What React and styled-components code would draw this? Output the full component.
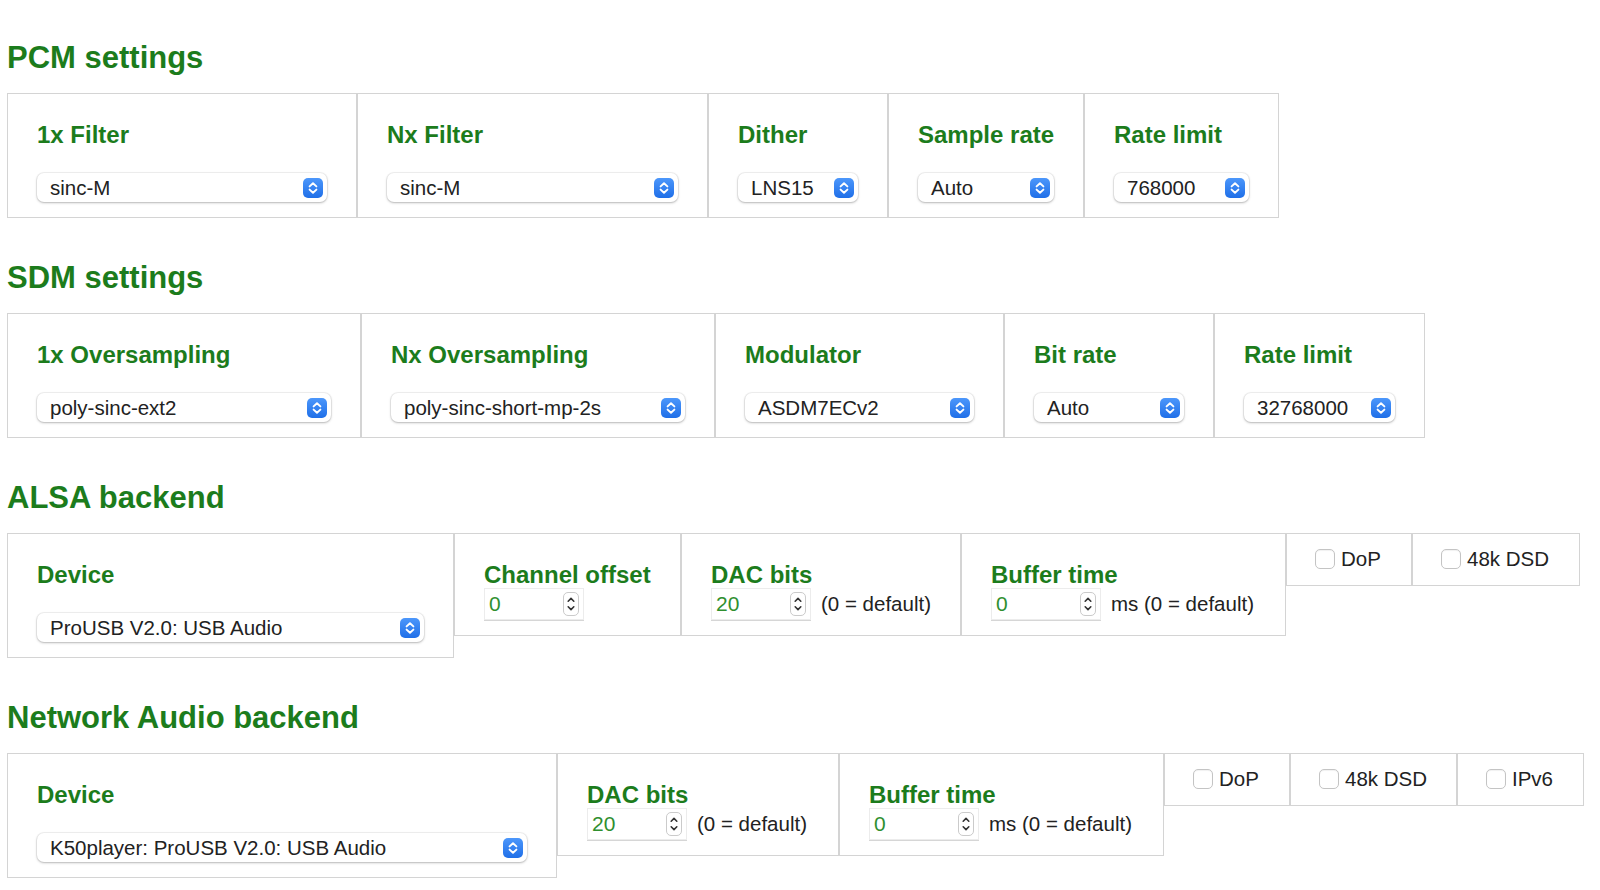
import React from 'react';
import styled, { createGlobalStyle } from 'styled-components';

const GlobalStyle = createGlobalStyle`
    html, body {
        margin: 0;
        padding: 0;
        background: #fff;
    }
    body {
        font-family: "Liberation Sans", Arial, Helvetica, sans-serif;
        color: #222;
    }
`

const Page = styled.div`
    padding: 40px 0 0 7px;
`

const Section = styled.section`
    margin-bottom: 42px;
`

const Heading = styled.h2`
    margin: 0 0 17px;
    font-size: 31px;
    line-height: 36px;
    font-weight: bold;
    color: #1c7c1c;
`

const Row = styled.div`
    display: flex;
    align-items: flex-start;
`

const Cell = styled.div`
    box-sizing: border-box;
    flex: none;
    width: ${p => p.$w}px;
    border: 1px solid #d4d4d4;
    padding: 29px 29px 15px;
`

const CheckCell = styled(Cell)`
    height: 53px;
    padding: 0 28px 2px;
    display: flex;
    align-items: center;
    gap: 6px;
    font-size: 20.5px;
    color: #222;
`

const Label = styled.div`
    font-size: 24px;
    line-height: 24px;
    font-weight: bold;
    color: #1c7c1c;
    white-space: nowrap;
`

const Select = styled.div`
    box-sizing: border-box;
    margin-top: 26px;
    height: 29px;
    width: 100%;
    display: flex;
    align-items: center;
    justify-content: space-between;
    padding: 0 4px 0 13px;
    background: #fff;
    border-radius: 7px;
    box-shadow: 0 0 0 1px rgba(0, 0, 0, 0.05), 0 1px 2.5px rgba(0, 0, 0, 0.25);
    font-size: 20.5px;
    color: #222;
    white-space: nowrap;
`

const Stepper = styled.span`
    flex: none;
    width: 20px;
    height: 20px;
    border-radius: 5px;
    background: linear-gradient(#4c97fb, #1f6fe8);
    display: flex;
    align-items: center;
    justify-content: center;
`

const NumberRow = styled.div`
    margin-top: 1px;
    display: flex;
    align-items: center;
    gap: 10px;
    font-size: 20.5px;
    color: #222;
    white-space: nowrap;
`

const NumberBox = styled.div`
    box-sizing: border-box;
    flex: none;
    width: ${p => p.$w}px;
    height: 32px;
    display: flex;
    align-items: center;
    justify-content: space-between;
    padding: 0 4px 0 4px;
    border: 1px solid #ececec;
    box-shadow: 0 1px 0 #d6d6d6;
    color: #2f8f2f;
    font-size: 21px;
`

const Spin = styled.span`
    box-sizing: border-box;
    width: 16px;
    height: 24px;
    border: 1px solid #cbcbcb;
    border-radius: 5px;
    display: flex;
    align-items: center;
    justify-content: center;
`

const Box = styled.span`
    box-sizing: border-box;
    flex: none;
    width: 20px;
    height: 20px;
    border: 1px solid #c4c4c4;
    border-radius: 5px;
    background: #fff;
    box-shadow: inset 0 1px 1px rgba(0, 0, 0, 0.06);
`

const Chevrons = () => (
    <svg width="20" height="20" viewBox="0 0 20 20" fill="none" stroke="#fff" strokeWidth="1.9" strokeLinecap="round" strokeLinejoin="round">
        <path d="M6.6 8.4 L10 5.2 L13.4 8.4" />
        <path d="M6.6 11.6 L10 14.8 L13.4 11.6" />
    </svg>
)

const SpinArrows = () => (
    <svg width="14" height="22" viewBox="0 0 14 22" fill="none" stroke="#333" strokeWidth="1.6" strokeLinecap="round" strokeLinejoin="round">
        <path d="M4.2 8.2 L7 5.4 L9.8 8.2" />
        <path d="M4.2 13.8 L7 16.6 L9.8 13.8" />
    </svg>
)

const sections = [
    {
        title: 'PCM settings',
        cells: [
            { kind: 'select', label: '1x Filter', value: 'sinc-M', w: 350 },
            { kind: 'select', label: 'Nx Filter', value: 'sinc-M', w: 351 },
            { kind: 'select', label: 'Dither', value: 'LNS15', w: 180 },
            { kind: 'select', label: 'Sample rate', value: 'Auto', w: 196 },
            { kind: 'select', label: 'Rate limit', value: '768000', w: 195 },
        ],
    },
    {
        title: 'SDM settings',
        cells: [
            { kind: 'select', label: '1x Oversampling', value: 'poly-sinc-ext2', w: 354 },
            { kind: 'select', label: 'Nx Oversampling', value: 'poly-sinc-short-mp-2s', w: 354 },
            { kind: 'select', label: 'Modulator', value: 'ASDM7ECv2', w: 289 },
            { kind: 'select', label: 'Bit rate', value: 'Auto', w: 210 },
            { kind: 'select', label: 'Rate limit', value: '32768000', w: 211 },
        ],
    },
    {
        title: 'ALSA backend',
        cells: [
            { kind: 'select', label: 'Device', value: 'ProUSB V2.0: USB Audio', w: 447 },
            { kind: 'number', label: 'Channel offset', value: '0', box: 100, w: 227 },
            { kind: 'number', label: 'DAC bits', value: '20', box: 100, suffix: '(0 = default)', w: 280 },
            { kind: 'number', label: 'Buffer time', value: '0', box: 110, suffix: 'ms (0 = default)', w: 325 },
            { kind: 'check', label: 'DoP', w: 126 },
            { kind: 'check', label: '48k DSD', w: 168 },
        ],
    },
    {
        title: 'Network Audio backend',
        cells: [
            { kind: 'select', label: 'Device', value: 'K50player: ProUSB V2.0: USB Audio', w: 550 },
            { kind: 'number', label: 'DAC bits', value: '20', box: 100, suffix: '(0 = default)', w: 282 },
            { kind: 'number', label: 'Buffer time', value: '0', box: 110, suffix: 'ms (0 = default)', w: 325 },
            { kind: 'check', label: 'DoP', w: 126 },
            { kind: 'check', label: '48k DSD', w: 167 },
            { kind: 'check', label: 'IPv6', w: 127 },
        ],
    },
]

const Field = ({ cell }) => {
    if (cell.kind === 'check') {
        return (
            <CheckCell $w={cell.w}>
                <Box />
                <span>{cell.label}</span>
            </CheckCell>
        )
    }
    if (cell.kind === 'number') {
        return (
            <Cell $w={cell.w}>
                <Label>{cell.label}</Label>
                <NumberRow>
                    <NumberBox $w={cell.box}>
                        <span>{cell.value}</span>
                        <Spin><SpinArrows /></Spin>
                    </NumberBox>
                    {cell.suffix && <span>{cell.suffix}</span>}
                </NumberRow>
            </Cell>
        )
    }
    return (
        <Cell $w={cell.w}>
            <Label>{cell.label}</Label>
            <Select>
                <span>{cell.value}</span>
                <Stepper><Chevrons /></Stepper>
            </Select>
        </Cell>
    )
}

const App = () => {
    return (
        <Page>
            <GlobalStyle />
            {sections.map(section => (
                <Section key={section.title}>
                    <Heading>{section.title}</Heading>
                    <Row>
                        {section.cells.map((cell, i) => <Field key={i} cell={cell} />)}
                    </Row>
                </Section>
            ))}
        </Page>
    )
}

export default App
